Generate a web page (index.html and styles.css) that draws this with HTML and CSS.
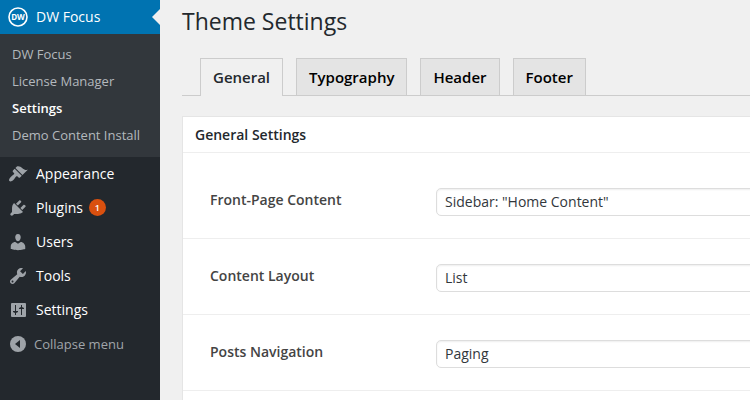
FILE: index.html
```html
<!DOCTYPE html>
<html lang="en">
<head>
    <meta charset="UTF-8">
    <meta name="viewport" content="width=device-width, initial-scale=1.0">
    <title>Theme Settings</title>
    <link rel="stylesheet" href="styles.css">
</head>
<body>
    <nav class="sidebar">
        <a class="menu-item current" href="#">
            <svg class="icon" viewBox="0 0 20 20">
                <circle cx="10" cy="10" r="9" fill="none" stroke="#fff" stroke-width="1.6"/>
                <text class="logo-text" x="10" y="13" text-anchor="middle">DW</text>
            </svg>
            <span class="name">DW Focus</span>
        </a>
        <div class="submenu">
            <a href="#">DW Focus</a>
            <a href="#">License Manager</a>
            <a class="active" href="#">Settings</a>
            <a href="#">Demo Content Install</a>
        </div>
        <a class="menu-item" href="#">
            <svg class="icon" viewBox="0 0 20 20"><path d="M14.48 11.06L7.41 3.99l1.5-1.5c.5-.56 2.3-.47 3.51.32 1.21.8 1.43 1.28 2.91 2.1 1.18.64 2.45 1.26 4.45.85zm-.71.71L6.7 4.7 4.93 6.47c-.39.39-.39 1.02 0 1.41l1.06 1.06c.39.39.39 1.03 0 1.42-.6.6-1.43 1.11-2.21 1.69-.35.26-.7.53-1.01.84C1.43 14.23.4 16.08 1.4 17.07c.99 1 2.84-.03 4.18-1.36.31-.31.58-.66.85-1.02.57-.78 1.08-1.61 1.69-2.21.39-.39 1.02-.39 1.41 0l1.06 1.06c.39.39 1.02.39 1.41 0z"/></svg>
            <span class="name">Appearance</span>
        </a>
        <a class="menu-item" href="#">
            <svg class="icon" viewBox="0 0 20 20"><path d="M13.11 4.36L9.87 7.6 8 5.73l3.24-3.24c.35-.34 1.05-.2 1.56.32.52.51.66 1.21.31 1.55zm-8 1.77l.91-1.12 9.01 9.01-1.19.84c-.71.71-2.63 1.16-3.82 1.16H6.14L4.9 17.26c-.59.59-1.54.59-2.12 0-.59-.58-.59-1.53 0-2.12l1.24-1.24v-3.88c0-1.13.4-3.19 1.09-3.89zm7.26 3.97l3.24-3.24c.34-.35 1.04-.21 1.55.31.52.51.66 1.21.31 1.55l-3.24 3.25z"/></svg>
            <span class="name">Plugins <span class="count">1</span></span>
        </a>
        <a class="menu-item" href="#">
            <svg class="icon" viewBox="0 0 20 20"><path d="M10 9.25c-2.27 0-2.73-3.44-2.73-3.44C7 4.02 7.82 2 9.97 2c2.16 0 2.98 2.02 2.71 3.81 0 0-.41 3.44-2.68 3.44zm0 2.57L12.72 10c2.39 0 4.52 2.33 4.52 4.53v2.49s-3.65 1.13-7.24 1.13c-3.65 0-7.24-1.13-7.24-1.13v-2.49c0-2.25 1.94-4.48 4.47-4.48z"/></svg>
            <span class="name">Users</span>
        </a>
        <a class="menu-item" href="#">
            <svg class="icon" viewBox="0 0 20 20"><path d="M16.68 9.77c-1.34 1.34-3.3 1.67-4.95.99l-5.41 6.52c-.99.99-2.59.99-3.58 0s-.99-2.59 0-3.57l6.52-5.42c-.68-1.65-.35-3.61.99-4.95 1.28-1.28 3.12-1.62 4.72-1.06l-2.89 2.89 2.82 2.82 2.86-2.87c.53 1.58.18 3.39-1.08 4.65zM3.81 16.21c.4.39 1.04.39 1.43 0 .4-.4.4-1.04 0-1.43-.39-.4-1.03-.4-1.43 0-.39.39-.39 1.03 0 1.43z"/></svg>
            <span class="name">Tools</span>
        </a>
        <a class="menu-item" href="#">
            <svg class="icon" viewBox="0 0 20 20">
                <rect x="3" y="3" width="15" height="14" rx="1"/>
                <path class="cut" d="M7 5h1v6h2v1l-2 1v2H7v-2l-2-1v-1h2zM13 5h1v2l2 1v1h-2v6h-1V9h-2V8l2-1z"/>
            </svg>
            <span class="name">Settings</span>
        </a>
        <button class="menu-item collapse" type="button">
            <svg class="icon" viewBox="0 0 20 20">
                <circle cx="10" cy="10" r="8"/>
                <path class="cut" d="M12 6v8l-5-4z"/>
            </svg>
            <span>Collapse menu</span>
        </button>
    </nav>
    <main class="content">
        <h1>Theme Settings</h1>
        <div class="tabs">
            <a class="tab tab-active" href="#">General</a>
            <a class="tab" href="#">Typography</a>
            <a class="tab" href="#">Header</a>
            <a class="tab" href="#">Footer</a>
        </div>
        <form class="panel">
            <h2>General Settings</h2>
            <div class="rows">
                <div class="row">
                    <label for="front-page">Front-Page Content</label>
                    <select id="front-page"><option>Sidebar: "Home Content"</option></select>
                </div>
                <div class="row">
                    <label for="layout">Content Layout</label>
                    <select id="layout"><option>List</option></select>
                </div>
                <div class="row">
                    <label for="navigation">Posts Navigation</label>
                    <select id="navigation"><option>Paging</option></select>
                </div>
            </div>
        </form>
    </main>
</body>
</html>
```
FILE: styles.css
```css
* {
    box-sizing: border-box;
}
body {
    margin: 0;
    display: flex;
    min-height: 100vh;
    background: #f0f0f0;
    color: #23282d;
    font-family: "Open Sans", sans-serif;
    font-size: 14px;
}
a {
    text-decoration: none;
}
.sidebar {
    flex: 0 0 160px;
    background: #23282d;
}
.menu-item {
    display: flex;
    align-items: center;
    gap: 8px;
    width: 100%;
    height: 34px;
    padding: 0 8px;
    color: #fff;
    font-size: 14px;
    font-weight: 500;
}
.name {
    display: flex;
    align-items: center;
    gap: 6px;
    padding-bottom: 2px;
}
.current {
    position: relative;
    background: #0073b1;
}
.current::after {
    content: "";
    position: absolute;
    right: 0;
    top: 9px;
    border: 8px solid transparent;
    border-left: 0;
    border-right-color: #f0f0f0;
}
.icon {
    flex: none;
    width: 20px;
    height: 20px;
    fill: #9ea3a8;
}
.icon .logo-text {
    fill: #fff;
    font-size: 8px;
    font-weight: 700;
}
.icon .cut {
    fill: #23282d;
}
.submenu {
    padding: 7px 0 8px;
    background: #32373c;
}
.submenu a {
    display: block;
    padding: 0 12px;
    color: #b4b9be;
    font-size: 13px;
    line-height: 27px;
}
.submenu .active {
    color: #fff;
    font-weight: 600;
}
.count {
    width: 17px;
    border-radius: 9px;
    background: #d9500f;
    font-size: 9px;
    font-weight: 600;
    line-height: 17px;
    text-align: center;
}
.collapse {
    gap: 6px;
    border: 0;
    background: none;
    color: #a0a5aa;
    font-family: inherit;
    font-size: 13px;
    font-weight: 400;
}
.content {
    flex: 1;
    min-width: 0;
    display: flex;
    flex-direction: column;
    padding: 6px 0 0 22px;
    overflow: hidden;
}
h1 {
    margin: 0;
    font-size: 23px;
    font-weight: 400;
    line-height: 30px;
}
.tabs {
    display: flex;
    gap: 13px;
    margin-top: 22px;
    padding-left: 18px;
    border-bottom: 1px solid #ccc;
}
.tab {
    height: 37px;
    padding: 0 12px;
    border: 1px solid #ccc;
    border-bottom: 0;
    background: #e4e4e4;
    color: #000;
    font-size: 15px;
    font-weight: 600;
    line-height: 37px;
}
.tab-active {
    margin-bottom: -1px;
    height: 38px;
    background: #f0f0f0;
    color: #23282d;
}
.panel {
    flex: 1;
    min-width: 620px;
    margin-top: 20px;
    border: 1px solid #e5e5e5;
    border-bottom: 0;
    background: #fff;
}
h2 {
    margin: 0;
    padding: 0 12px;
    border-bottom: 1px solid #eee;
    font-size: 14px;
    font-weight: 600;
    line-height: 35px;
}
.rows {
    padding-top: 10px;
}
.row {
    display: grid;
    grid-template-columns: 226px 1fr;
    padding: 25px 12px 22px 27px;
    border-bottom: 1px solid #eee;
}
.row label {
    color: #444;
    font-weight: 600;
    line-height: 24px;
}
.row select {
    appearance: none;
    height: 28px;
    padding: 0 8px 2px;
    border: 1px solid #ddd;
    border-radius: 5px;
    background: #fff;
    box-shadow: inset 0 1px 2px rgba(0, 0, 0, 0.07);
    color: #32373c;
    font-family: inherit;
    font-size: 14px;
}
```
